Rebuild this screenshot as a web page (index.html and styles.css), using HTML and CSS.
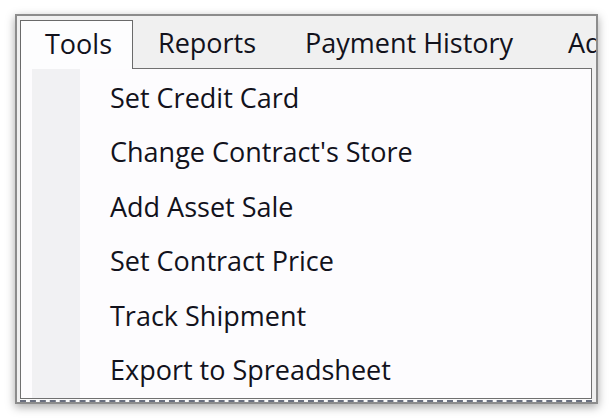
FILE: index.html
```html
<!DOCTYPE html>
<html>
<head>
<meta charset="utf-8">
<link rel="stylesheet" href="styles.css">
</head>
<body>
<div class="frame">
  <div class="menubar">
    <div class="mb-item tab">Tools</div>
    <div class="mb-item w-reports">Reports</div>
    <div class="mb-item w-payment">Payment History</div>
    <div class="mb-item w-ad">Ad</div>
  </div>
  <div class="dropdown">
    <div class="pad"></div>
    <div class="gutter"></div>
    <ul class="items">
      <li>Set Credit Card</li>
      <li>Change Contract's Store</li>
      <li>Add Asset Sale</li>
      <li>Set Contract Price</li>
      <li>Track Shipment</li>
      <li>Export to Spreadsheet</li>
    </ul>
  </div>
  <div class="strip"></div>
</div>
</body>
</html>
```

FILE: styles.css
```css
* { box-sizing: border-box; }
html, body { margin: 0; padding: 0; background: #ffffff; }
body { width: 610px; height: 418px; overflow: hidden; font-family: "Open Sans", "Noto Sans", sans-serif; color: #12121c; }

.frame {
  margin: 14px 0 0 15px;
  width: 583px;
  height: 390px;
  border: 2px solid #8c8c8c;
  box-shadow: 0 3px 9px rgba(0,0,0,0.35);
  background: #f0f0f0;
  overflow: hidden;
  display: flex;
  flex-direction: column;
}

.menubar {
  display: flex;
  height: 52px;
  padding: 4px 0 0 3px;
  font-size: 27px;
  flex: none;
}
.mb-item {
  padding-left: 25px;
  line-height: 46px;
  white-space: nowrap;
  flex: none;
  overflow: hidden;
}
.tab {
  width: 113px;
  padding-left: 24px;
  background: #fdfdfe;
  border: 1px solid #6a6a6a;
  border-bottom: none;
  height: 49px;
  position: relative;
  z-index: 1;
}
.w-reports { width: 147px; }
.w-payment { width: 263px; }
.w-ad { width: 60px; }

.dropdown {
  margin-left: 3px;
  width: 572px;
  height: 331px;
  border: 1px solid #707070;
  background: #fdfcfe;
  display: flex;
  flex: none;
}
.pad { width: 11px; flex: none; }
.gutter { width: 48px; flex: none; background: #f1f1f3; }
.items {
  list-style: none;
  margin: 0;
  padding: 2px 0 0 30px;
  font-size: 27px;
}
.items li {
  height: 54.4px;
  line-height: 54px;
  white-space: nowrap;
}
.strip {
  flex: 1;
  background: #fafafa;
  margin-left: 3px;
  width: 572px;
  border-bottom: 2px dashed #6a7080;
}
```
